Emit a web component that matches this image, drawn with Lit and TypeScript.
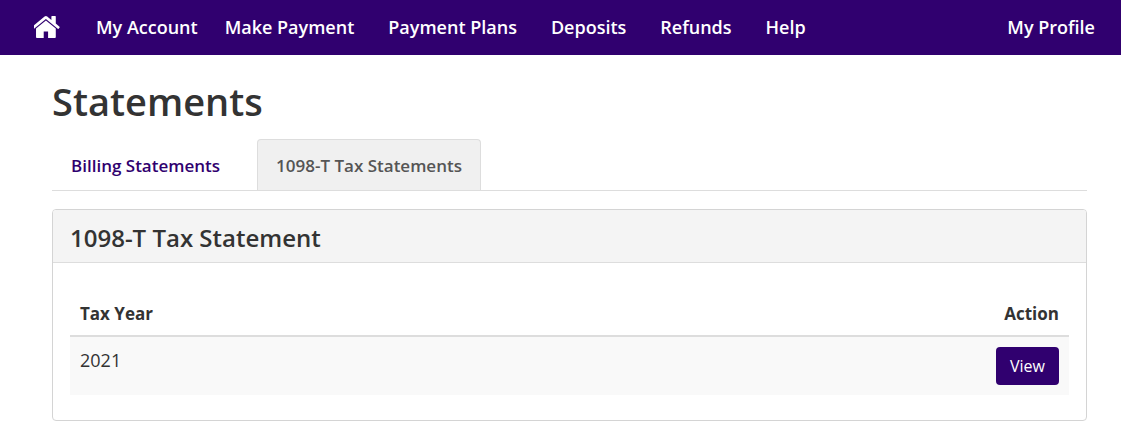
import { LitElement, html, css } from "lit";
import { customElement, state } from "lit/decorators.js";

@customElement("app-root")
export class AppRoot extends LitElement {
  static styles = css`
    :host {
      display: block;
      font-family: "Segoe UI", "Open Sans", "Noto Sans", sans-serif;
      font-size: 18px;
      line-height: 26px;
      color: #333;
      background: #fff;
    }
    * { box-sizing: border-box; }
    .bar {
      display: flex;
      align-items: center;
      height: 55px;
      padding: 0 26px 2px 34px;
      background: #30006f;
      font-weight: 600;
      white-space: nowrap;
    }
    .bar a { color: #fff; text-decoration: none; }
    .home { display: flex; margin-right: 36px; }
    .menu { display: flex; flex: 1; gap: 34px; }
    .account { display: flex; gap: 27px; }
    main { padding: 22px 34px 22px 52px; }
    h1 { margin: 0 0 14px; font-size: 38px; line-height: 48px; font-weight: 600; }
    .tabs { display: flex; gap: 18px; border-bottom: 1px solid #ddd; }
    .tab {
      margin: 0 0 -1px;
      padding: 13px 18px 12px;
      border: 1px solid transparent;
      border-bottom: 0;
      border-radius: 4px 4px 0 0;
      background: none;
      font: inherit;
      font-size: 17px;
      font-weight: 600;
      color: #30006f;
      cursor: pointer;
    }
    .tab[aria-selected="true"] {
      background: #f0f0f0;
      border-color: #ddd;
      color: #555;
      box-shadow: inset 0 -1px #ddd;
    }
    .panel { margin-top: 18px; border: 1px solid #d4d4d4; border-radius: 4px; }
    .panel h2 {
      margin: 0;
      padding: 14px 17px 10px;
      border-bottom: 1px solid #ddd;
      border-radius: 3px 3px 0 0;
      background: #f4f4f4;
      font-size: 24px;
      line-height: 28px;
      font-weight: 600;
    }
    .body { padding: 28px 17px 25px; }
    table { width: 100%; border-collapse: separate; border-spacing: 0; }
    th, td { padding: 10px; text-align: left; vertical-align: top; }
    th { padding-bottom: 8px; border-bottom: 2px solid #ddd; font-size: 17px; font-weight: 700; }
    td { background: #f9f9f9; }
    .action { text-align: right; }
    .view {
      display: block;
      height: 38px;
      margin-left: auto;
      padding: 0 14px;
      border: 0;
      border-radius: 4px;
      background: #30006f;
      color: #fff;
      font: inherit;
      font-size: 16px;
      cursor: pointer;
    }
  `;

  @state() private active = 1;

  private tabs = ["Billing Statements", "1098-T Tax Statements"];

  render() {
    return html`
      <nav class="bar">
        <a class="home" href="#" aria-label="Home">
          <svg width="26" height="22" viewBox="151 253 1490 1283" fill="#fff">
            <path d="M1408 992v480q0 26-19 45t-45 19h-384v-384h-256v384h-384q-26 0-45-19t-19-45v-480q0-1 .5-3t.5-3l575-474 575 474q1 2 1 6zm223-69l-62 74q-8 9-21 11h-3q-13 0-21-7l-692-577-692 577q-12 8-24 7-13-2-21-11l-62-74q-8-10-7-23.5t11-21.5l719-599q32-26 76-26t76 26l244 204v-195q0-14 9-23t23-9h192q14 0 23 9t9 23v408l219 182q10 8 11 21.5t-7 23.5z"/>
          </svg>
        </a>
        <div class="menu">
          <div class="account">
            <a href="#account">My Account</a>
            <a href="#pay">Make Payment</a>
          </div>
          <a href="#plans">Payment Plans</a>
          <a href="#deposits">Deposits</a>
          <a href="#refunds">Refunds</a>
          <a href="#help">Help</a>
        </div>
        <a href="#profile">My Profile</a>
      </nav>
      <main>
        <h1>Statements</h1>
        <div class="tabs" role="tablist">
          ${this.tabs.map(
            (label, i) => html`<button class="tab" role="tab" aria-selected=${this.active === i}
              @click=${() => (this.active = i)}>${label}</button>`
          )}
        </div>
        <section class="panel">
          <h2>1098-T Tax Statement</h2>
          <div class="body">
            <table>
              <thead>
                <tr><th scope="col">Tax Year</th><th scope="col" class="action">Action</th></tr>
              </thead>
              <tbody>
                <tr><td>2021</td><td><button class="view">View</button></td></tr>
              </tbody>
            </table>
          </div>
        </section>
      </main>
    `;
  }
}
